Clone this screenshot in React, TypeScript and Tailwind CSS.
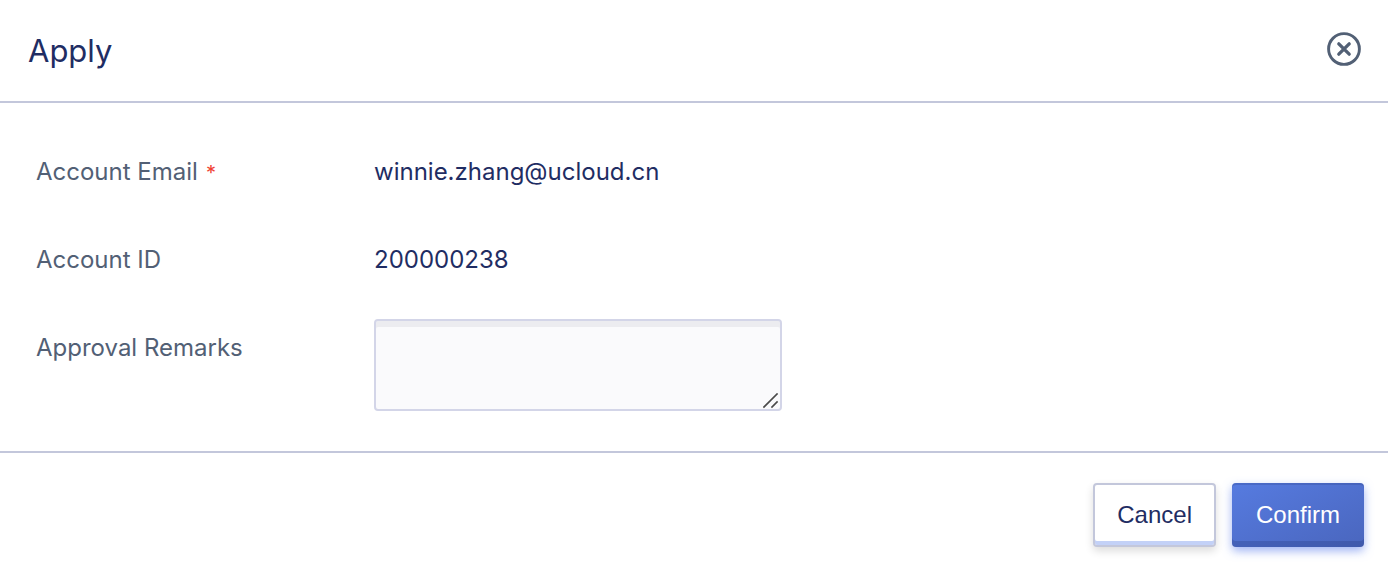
import type { ReactNode } from 'react';

function Field({ label, htmlFor, required, children }: { label: string; htmlFor: string; required?: boolean; children: ReactNode }) {
  return (
    <div className="flex items-start">
      <label htmlFor={htmlFor} className="w-[338px] shrink-0 text-2xl leading-[58px] text-[#526075]">
        {label}
        {required && <span className="ml-2 text-xl text-[#f04134]">*</span>}
      </label>
      {children}
    </div>
  );
}

export default function App() {
  return (
    <form
      role="dialog"
      aria-labelledby="title"
      className="w-full bg-white font-['Inter','Liberation_Sans',sans-serif] text-[#1f2d63]"
      onSubmit={(e) => e.preventDefault()}
    >
      <header className="flex items-center justify-between border-b-2 border-[#c3c7db] pt-[27px] pr-[27px] pb-[26px] pl-7">
        <h1 id="title" className="text-[31px] leading-[48px]">Apply</h1>
        <button type="button" aria-label="Close" className="mb-1 text-[#526075]">
          <svg width="34" height="34" viewBox="0 0 34 34" fill="none" stroke="currentColor">
            <circle cx="17" cy="17" r="15.4" strokeWidth="2.9" />
            <path d="M11.8 11.8l10.4 10.4M22.2 11.8l-10.4 10.4" strokeWidth="3.3" strokeLinecap="round" />
          </svg>
        </button>
      </header>

      <main className="flex flex-col gap-[30px] border-b-2 border-[#c3c7db] px-9 py-10">
        <Field label="Account Email" htmlFor="email" required>
          <output id="email" className="text-2xl leading-[58px]">winnie.zhang@ucloud.cn</output>
        </Field>
        <Field label="Account ID" htmlFor="account-id">
          <output id="account-id" className="text-2xl leading-[58px]">200000238</output>
        </Field>
        <Field label="Approval Remarks" htmlFor="remarks">
          <div className="relative flex">
            <textarea
              id="remarks"
              className="h-[92px] w-[408px] resize-none rounded border-2 border-[#d3d5e8] bg-[#fafafc] px-4 py-3 text-2xl shadow-[inset_0_6px_0_#ececf0] outline-none"
            />
            <svg className="pointer-events-none absolute right-[3px] bottom-[2px]" width="16" height="16" viewBox="0 0 16 16" fill="none" stroke="#4a4a4a" strokeWidth="1.6" aria-hidden="true">
              <path d="M.4 14.6L14.6 .4M8.4 14.6L14.6 8.4" />
            </svg>
          </div>
        </Field>
      </main>

      <footer className="flex justify-end gap-4 px-6 pt-[30px] pb-[27px] font-['Liberation_Sans',Arial,sans-serif] text-2xl">
        <button
          type="button"
          className="h-16 rounded border-2 border-[#c3c7db] bg-white px-[22px] shadow-[inset_0_-4px_0_#c3d1f7,0_4px_8px_rgba(0,0,0,0.14)]"
        >
          Cancel
        </button>
        <button
          type="submit"
          className="h-16 rounded bg-linear-to-br from-[#567be0] to-[#4a66be] px-6 text-white shadow-[inset_0_2px_0_rgba(40,60,130,0.25),inset_0_-6px_0_rgba(40,60,130,0.3),0_4px_10px_rgba(82,118,235,0.55)]"
        >
          Confirm
        </button>
      </footer>
    </form>
  );
}
